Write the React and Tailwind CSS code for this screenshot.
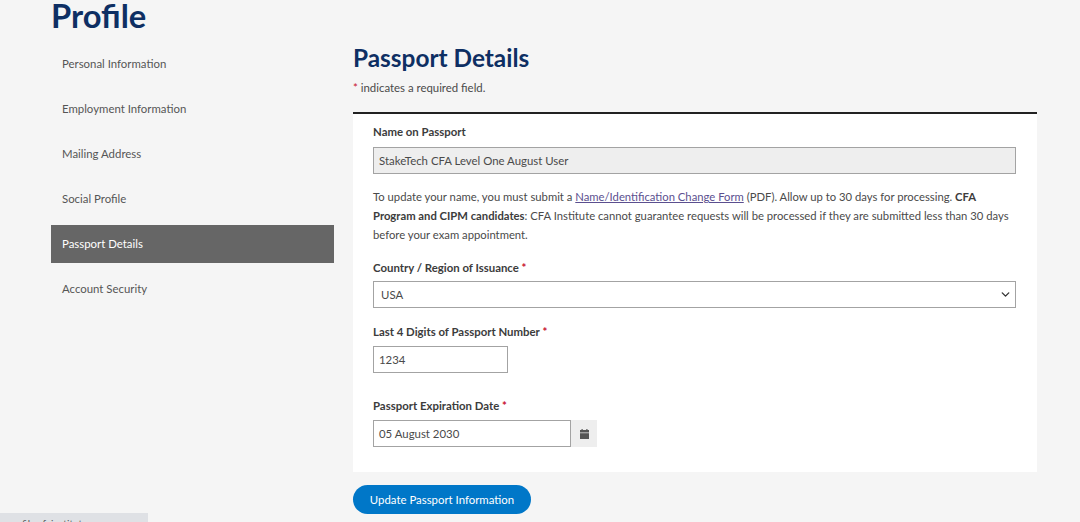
import React from "react";
import { ChevronDown } from "lucide-react";

const nav = ["Personal Information", "Employment Information", "Mailing Address", "Social Profile", "Passport Details", "Account Security"];

function Req() {
  return <span className="text-[#c8102e]"> *</span>;
}

export default function App() {
  return (
    <div className="relative w-[1080px] h-[522px] overflow-hidden bg-[#f5f5f5] text-[#4a4a4a] text-[11.4px] font-['Lato','Liberation_Sans',sans-serif]">
      <div className="flex pl-[51px]">
        <div className="w-[283px] shrink-0">
          <h1 className="text-[32.7px] leading-[34px] font-bold text-[#0e2f63] h-[44px] -mt-px">Profile</h1>
          <nav className="flex flex-col gap-[7px] pt-[2px]">
            {nav.map((n) => (
              <div key={n} className={n === "Passport Details" ? "h-[38px] flex items-center pl-[11px] bg-[#666666] text-white" : "h-[38px] flex items-center pl-[11px] text-[#555555]"}>
                {n}
              </div>
            ))}
          </nav>
        </div>
        <div className="ml-[19px] w-[684px] pt-[43px]">
          <h2 className="text-[24.4px] leading-[30px] font-bold text-[#0e2f63]">Passport Details</h2>
          <p className="mt-[7px] leading-[16px] h-[32px]"><span className="text-[#c8102e]">*</span> indicates a required field.</p>
          <div className="border-t-2 border-[#222222] bg-white h-[360px] pl-[20px] pr-[21px] pt-[10px]">
            <div className="font-bold text-[#3c3c3c] leading-[16px]">Name on Passport</div>
            <div className="mt-[7px] h-[27px] border border-[#a3a3a3] bg-[#eeeeee] flex items-center pl-[5px] text-[#4a4a4a]">StakeTech CFA Level One August User</div>
            <p className="mt-[13px] leading-[19px] text-[11.28px]">
              To update your name, you must submit a <a className="underline text-[#5b4f8f]">Name/Identification Change Form</a> (PDF). Allow up to 30 days for processing. <b className="text-[#3c3c3c]">CFA Program and CIPM candidates</b>: CFA Institute cannot guarantee requests will be processed if they are submitted less than 30 days before your exam appointment.
            </p>
            <div className="mt-[16px] font-bold text-[#3c3c3c] leading-[16px]">Country / Region of Issuance<Req /></div>
            <div className="mt-[5px] h-[27px] border border-[#a3a3a3] bg-white flex items-center justify-between pl-[7px] pr-[3px]">
              <span>USA</span>
              <ChevronDown size={13} strokeWidth={2.5} className="text-[#333333]" />
            </div>
            <div className="mt-[16px] font-bold text-[#3c3c3c] leading-[16px]">Last 4 Digits of Passport Number<Req /></div>
            <div className="mt-[6px] w-[135px] h-[27px] border border-[#a3a3a3] flex items-center pl-[5px]">1234</div>
            <div className="mt-[25px] font-bold text-[#3c3c3c] leading-[16px]">Passport Expiration Date<Req /></div>
            <div className="mt-[6px] flex h-[27px]">
              <div className="w-[198px] border border-[#a3a3a3] flex items-center pl-[5px]">05 August 2030</div>
              <div className="w-[26px] bg-[#eeeeee] flex items-center justify-center">
                <svg width="9" height="10" viewBox="0 0 9 10" fill="#555555"><rect x="0" y="1" width="9" height="2.5" /><rect x="0" y="4.2" width="9" height="5.8" /><rect x="1.5" y="0" width="1.2" height="1.5" /><rect x="6.3" y="0" width="1.2" height="1.5" /></svg>
              </div>
            </div>
          </div>
          <button className="mt-[13px] w-[178px] h-[29px] rounded-full bg-[#0077c8] text-white">Update Passport Information</button>
        </div>
      </div>
      <div className="absolute left-0 top-[513px] w-[148px] h-[9px] bg-[#dfe1e5] overflow-hidden pl-[22px] text-[10px] leading-[20px] text-[#555555]">file.cfainstitute</div>
    </div>
  );
}
